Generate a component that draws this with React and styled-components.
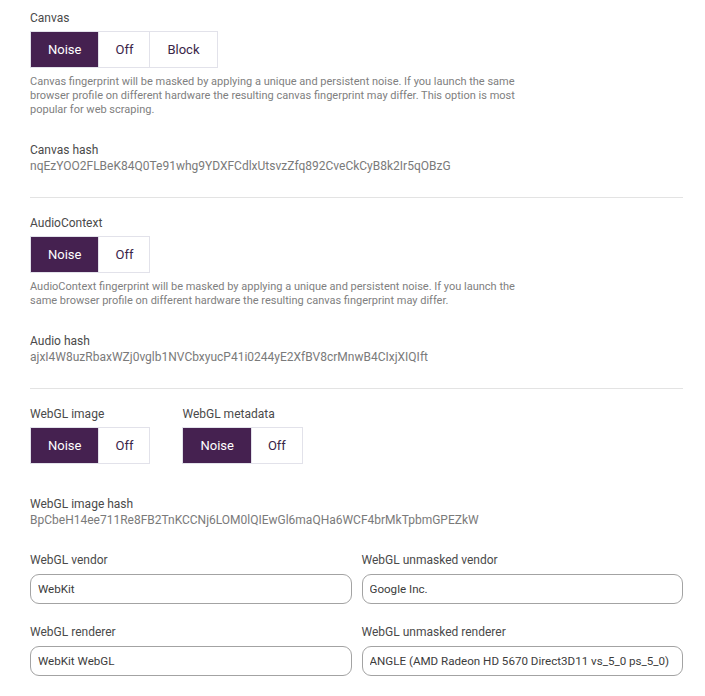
import React from 'react';
import styled, { createGlobalStyle } from 'styled-components';

const GlobalStyle = createGlobalStyle`
  body {
    margin: 0;
    background: #ffffff;
    font-family: Roboto, "Liberation Sans", Arial, sans-serif;
  }
`;

const Page = styled.div`
  padding: 10px 22px 0 30px;
`;

const Section = styled.div`
  display: flex;
  flex-direction: column;
  align-items: flex-start;
`;

const Label = styled.div`
  font-size: 12px;
  line-height: 16px;
  color: #4a4a4a;
  margin-bottom: ${({ $gap }) => $gap || 5}px;
`;

const Group = styled.div`
  display: flex;
`;

const Option = styled.button`
  height: 37px;
  padding: 0 ${({ $pad }) => $pad}px;
  border: 1px solid #e2e2ea;
  margin-left: -1px;
  background: ${({ $active }) => ($active ? '#452150' : '#ffffff')};
  color: ${({ $active }) => ($active ? '#ffffff' : '#3a2548')};
  font-family: Roboto, "Liberation Sans", Arial, sans-serif;
  font-size: 13px;
  cursor: pointer;

  &:first-child {
    margin-left: 0;
  }
`;

const Description = styled.p`
  margin: 7px 0 0;
  max-width: 490px;
  font-size: 11px;
  line-height: 14px;
  color: #808080;
`;

const Hash = styled.div`
  margin-top: ${({ $top }) => $top || 25}px;
`;

const HashLabel = styled.div`
  font-size: 12px;
  line-height: 16px;
  color: #4a4a4a;
`;

const HashValue = styled.div`
  font-size: 12px;
  line-height: 16px;
  color: #7a7a7a;
`;

const Divider = styled.hr`
  margin: 23px 0 17px;
  border: none;
  border-top: 1px solid #e3e3e3;
`;

const GroupRow = styled.div`
  display: flex;
  gap: 32px;
`;

const Fields = styled.div`
  display: grid;
  grid-template-columns: 1fr 1fr;
  column-gap: 10px;
  row-gap: 20px;
  margin-top: 24px;
`;

const Field = styled.div`
  display: flex;
  flex-direction: column;
`;

const Input = styled.input`
  box-sizing: border-box;
  height: 30px;
  width: 100%;
  padding: 0 7px;
  border: 1px solid #a3a3a3;
  border-radius: 9px;
  font-family: Roboto, "Liberation Sans", Arial, sans-serif;
  font-size: 11.6px;
  color: #3c3c3c;
  background: #fff;
  outline: none;
`;

const padFor = (o) => (o === 'Off' ? 16 : 17);

const Toggle = ({ options, active }) => (
  <Group>
    {options.map((o) => (
      <Option key={o} $active={o === active} $pad={padFor(o)}>
        {o}
      </Option>
    ))}
  </Group>
);

const fields = [
  ['WebGL vendor', 'WebKit'],
  ['WebGL unmasked vendor', 'Google Inc.'],
  ['WebGL renderer', 'WebKit WebGL'],
  ['WebGL unmasked renderer', 'ANGLE (AMD Radeon HD 5670 Direct3D11 vs_5_0 ps_5_0)'],
];

const App = () => {
  return (
    <Page>
      <GlobalStyle />
      <Section>
        <Label>Canvas</Label>
        <Toggle options={['Noise', 'Off', 'Block']} active="Noise" />
        <Description>
          Canvas fingerprint will be masked by applying a unique and persistent noise. If you launch the same
          browser profile on different hardware the resulting canvas fingerprint may differ. This option is most
          popular for web scraping.
        </Description>
        <Hash>
          <HashLabel>Canvas hash</HashLabel>
          <HashValue>nqEzYOO2FLBeK84Q0Te91whg9YDXFCdlxUtsvzZfq892CveCkCyB8k2Ir5qOBzG</HashValue>
        </Hash>
      </Section>

      <Divider />

      <Section>
        <Label>AudioContext</Label>
        <Toggle options={['Noise', 'Off']} active="Noise" />
        <Description>
          AudioContext fingerprint will be masked by applying a unique and persistent noise. If you launch the
          same browser profile on different hardware the resulting canvas fingerprint may differ.
        </Description>
        <Hash>
          <HashLabel>Audio hash</HashLabel>
          <HashValue>ajxI4W8uzRbaxWZj0vglb1NVCbxyucP41i0244yE2XfBV8crMnwB4CIxjXIQIft</HashValue>
        </Hash>
      </Section>

      <Divider />

      <Section>
        <GroupRow>
          <div>
            <Label>WebGL image</Label>
            <Toggle options={['Noise', 'Off']} active="Noise" />
          </div>
          <div>
            <Label>WebGL metadata</Label>
            <Toggle options={['Noise', 'Off']} active="Noise" />
          </div>
        </GroupRow>
        <Hash $top={32}>
          <HashLabel>WebGL image hash</HashLabel>
          <HashValue>BpCbeH14ee711Re8FB2TnKCCNj6LOM0lQIEwGl6maQHa6WCF4brMkTpbmGPEZkW</HashValue>
        </Hash>
      </Section>

      <Fields>
        {fields.map(([label, value]) => (
          <Field key={label}>
            <Label $gap={6}>{label}</Label>
            <Input defaultValue={value} readOnly />
          </Field>
        ))}
      </Fields>
    </Page>
  );
};

export default App;
